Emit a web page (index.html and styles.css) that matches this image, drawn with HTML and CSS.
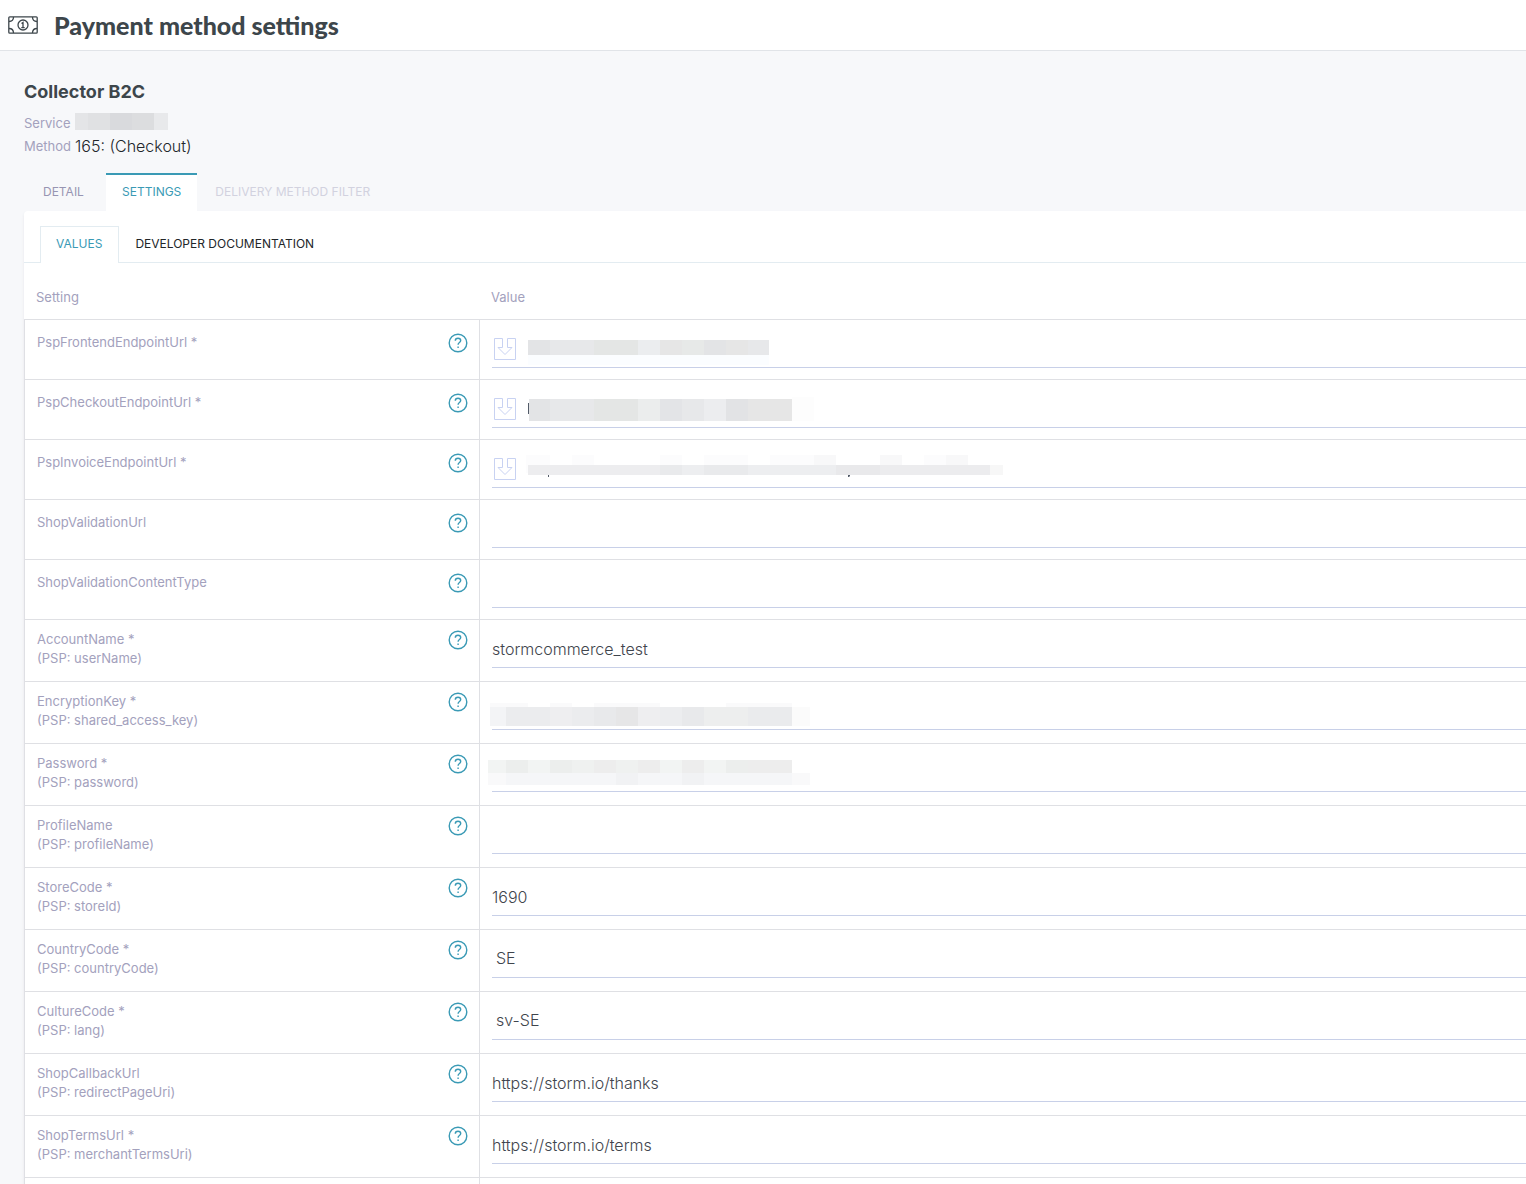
FILE: index.html
```html
<!DOCTYPE html>
<html lang="en">
<head>
<meta charset="utf-8">
<title>Payment method settings</title>
<link rel="stylesheet" href="styles.css">
</head>
<body>
<svg class="defs" aria-hidden="true">
  <symbol id="help" viewBox="0 0 20 20"><circle cx="10" cy="10" r="8.8"/><path d="M7.3 7.8C7.3 6.2 8.5 5.3 10 5.3s2.7.9 2.7 2.3c0 1.9-2.6 2-2.6 4.1M10.100 13.500v1.500"/></symbol>
  <symbol id="inherit" viewBox="0 0 22 22"><path d="M8.500.500H.500v21h21V.500h-8v9h4.500L11 16.500 4 9.500h4.500z"/></symbol>
</svg>
<header class="topbar">
  <svg class="money" viewBox="0 0 30 18" aria-hidden="true"><rect x=".8" y=".8" width="28.400" height="16.400" rx="1"/><circle cx="15" cy="9" r="5"/><path d="M13.500 7.500 15 6.500v5M13.300 11.700h3.400M1 5.500C4 5.500 5.500 4 5.500 1M29 5.500c-3 0-4.500-1.500-4.500-4.500M1 12.500c3 0 4.500 1.500 4.500 4.500M29 12.500c-3 0-4.500 1.500-4.500 4.500"/></svg>
  <h1>Payment method settings</h1>
</header>
<main>
  <section class="summary">
    <h2>Collector B2C</h2>
    <dl>
      <div><dt>Service</dt><dd><svg class="redacted" width="93" height="17" aria-hidden="true"><path fill="#e4e5e7" d="M0 0h13v17H0z"/><path fill="#e0e1e3" d="M13 0h22v17H13z"/><path fill="#d9dadd" d="M35 0h22v17H35z"/><path fill="#dcdddf" d="M57 0h22v17H57z"/><path fill="#e8e9eb" d="M79 0h14v17H79z"/></svg></dd></div>
      <div><dt>Method</dt><dd>165: (Checkout)</dd></div>
    </dl>
  </section>
  <nav class="tabs">
    <a href="#detail">DETAIL</a>
    <a href="#settings" class="active">SETTINGS</a>
    <a href="#filter" class="disabled">DELIVERY METHOD FILTER</a>
  </nav>
  <section class="panel">
    <nav class="subtabs">
      <a href="#values" class="active">VALUES</a>
      <a href="#docs">DEVELOPER DOCUMENTATION</a>
    </nav>
    <table>
      <thead><tr><th class="setting">Setting</th><th>Value</th></tr></thead>
      <tbody>
        <tr class="single"><td><div class="name"><label for="f1">PspFrontendEndpointUrl *</label><button type="button" aria-label="Help"><svg><use href="#help"/></svg></button></div></td>
          <td><div class="field"><svg class="inherit"><use href="#inherit"/></svg><input id="f1" type="text">
            <svg class="mosaic" viewBox="0 0 540 35"><path fill="#fbfdff" d="M36 23h241v10H36z"/><path fill="#e3e4e6" d="M36 8h22v15H36z"/><path fill="#e7e8ea" d="M58 8h44v15H58z"/><path fill="#e4e6e5" d="M102 8h44v15h-44z"/><path fill="#ebedef" d="M146 8h22v15h-22z"/><path fill="#e6e6e6" d="M168 8h22v15h-22z"/><path fill="#e7e9e8" d="M190 8h22v15h-22z"/><path fill="#e3e4e6" d="M212 8h22v15h-22z"/><path fill="#e6e6e6" d="M234 8h22v15h-22z"/><path fill="#e7e8ea" d="M256 8h21v15h-21z"/></svg></div></td></tr>
        <tr class="single"><td><div class="name"><label for="f2">PspCheckoutEndpointUrl *</label><button type="button" aria-label="Help"><svg><use href="#help"/></svg></button></div></td>
          <td><div class="field"><svg class="inherit"><use href="#inherit"/></svg><input id="f2" type="text">
            <svg class="mosaic" viewBox="0 0 540 35"><path fill="#535b68" d="M36 11h1v11h-1z"/><path fill="#fdfdfd" d="M300 5h22v24h-22z"/><path fill="#e3e4e6" d="M37 7h21v22H37z"/><path fill="#e7e8ea" d="M58 7h44v22H58z"/><path fill="#e4e6e5" d="M102 7h44v22h-44z"/><path fill="#ebeded" d="M146 7h22v22h-22z"/><path fill="#e3e4e7" d="M168 7h22v22h-22z"/><path fill="#e7e8ea" d="M190 7h22v22h-22z"/><path fill="#ecedef" d="M212 7h22v22h-22z"/><path fill="#e2e3e5" d="M234 7h22v22h-22z"/><path fill="#e6e6e6" d="M256 7h44v22h-44z"/></svg></div></td></tr>
        <tr class="single"><td><div class="name"><label for="f3">PspInvoiceEndpointUrl *</label><button type="button" aria-label="Help"><svg><use href="#help"/></svg></button></div></td>
          <td><div class="field"><svg class="inherit"><use href="#inherit"/></svg><input id="f3" type="text">
            <svg class="mosaic" viewBox="0 0 540 35"><path fill="#fcfcfd" d="M34 3h24v18H34zM80 3h22v10H80zM168 3h22v10h-22zM212 3h44v10h-44zM278 3h44v10h-44zM432 3h22v10h-22z"/><path fill="#f8f8f9" d="M322 3h22v10h-22zM388 3h22v10h-22zM454 3h22v10h-22z"/><path fill="#ededef" d="M36 13h132v10H36z"/><path fill="#e9eaec" d="M168 13h22v10h-22zM212 13h44v10h-44z"/><path fill="#edeef0" d="M190 13h22v10h-22zM256 13h88v10h-88z"/><path fill="#e9e9eb" d="M344 13h44v10h-44z"/><path fill="#ececee" d="M388 13h110v10H388z"/><path fill="#f7f7f7" d="M498 13h13v10h-13z"/><path fill="#535b68" d="M56 23h1v2h-1zM356 23h2v1l-1 1h-1z"/></svg></div></td></tr>
        <tr class="single"><td><div class="name"><label for="f4">ShopValidationUrl</label><button type="button" aria-label="Help"><svg><use href="#help"/></svg></button></div></td>
          <td><div class="field"><input id="f4" type="text"></div></td></tr>
        <tr class="single"><td><div class="name"><label for="f5">ShopValidationContentType</label><button type="button" aria-label="Help"><svg><use href="#help"/></svg></button></div></td>
          <td><div class="field"><input id="f5" type="text"></div></td></tr>
        <tr><td><div class="name"><label for="f6">AccountName *<br>(PSP: userName)</label><button type="button" aria-label="Help"><svg><use href="#help"/></svg></button></div></td>
          <td><div class="field"><input id="f6" type="text" value="stormcommerce_test"></div></td></tr>
        <tr><td><div class="name"><label for="f7">EncryptionKey *<br>(PSP: shared_access_key)</label><button type="button" aria-label="Help"><svg><use href="#help"/></svg></button></div></td>
          <td><div class="field"><input id="f7" type="text">
            <svg class="mosaic" viewBox="0 0 540 35"><path fill="#fafafb" d="M-2 9h16v4H-2zM14 9h22v4H14zM58 9h22v4H58zM102 9h66v4h-66zM234 9h66v4h-66z"/><path fill="#f3f4f6" d="M-2 13h16v19H-2z"/><path fill="#ebecee" d="M14 13h44v19H14zM80 13h22v19H80z"/><path fill="#eeeef0" d="M58 13h22v19H58zM146 13h22v19h-22z"/><path fill="#e8e9eb" d="M102 13h22v19h-22zM190 13h22v19h-22z"/><path fill="#e6e6e7" d="M124 13h22v19h-22z"/><path fill="#ecedef" d="M168 13h22v19h-22z"/><path fill="#edeeee" d="M212 13h44v19h-44z"/><path fill="#eaebed" d="M256 13h44v19h-44z"/><path fill="#fbfbfb" d="M300 13h18v19h-18z"/></svg></div></td></tr>
        <tr><td><div class="name"><label for="f8">Password *<br>(PSP: password)</label><button type="button" aria-label="Help"><svg><use href="#help"/></svg></button></div></td>
          <td><div class="field"><input id="f8" type="text">
            <svg class="mosaic" viewBox="0 0 540 35"><path fill="#f2f4f3" d="M-4 4h18v13H-4zM36 4h22v13H36zM168 4h22v13h-22zM212 4h22v13h-22z"/><path fill="#eceeed" d="M14 4h22v13H14zM58 4h22v13H58zM234 4h22v13h-22z"/><path fill="#eff1f0" d="M80 4h22v13H80zM124 4h22v13h-22z"/><path fill="#ededed" d="M102 4h22v13h-22zM146 4h22v13h-22zM190 4h22v13h-22zM256 4h44v13h-44z"/><path fill="#f9f9fa" d="M-4 17h18v12H-4zM300 17h18v12h-18z"/><path fill="#f5f6f8" d="M14 17h286v12H14z"/><path fill="#f1f2f4" d="M124 17h22v12h-22zM190 17h22v12h-22z"/></svg></div></td></tr>
        <tr><td><div class="name"><label for="f9">ProfileName<br>(PSP: profileName)</label><button type="button" aria-label="Help"><svg><use href="#help"/></svg></button></div></td>
          <td><div class="field"><input id="f9" type="text"></div></td></tr>
        <tr><td><div class="name"><label for="f10">StoreCode *<br>(PSP: storeId)</label><button type="button" aria-label="Help"><svg><use href="#help"/></svg></button></div></td>
          <td><div class="field"><input id="f10" type="text" value="1690"></div></td></tr>
        <tr><td><div class="name"><label for="f11">CountryCode *<br>(PSP: countryCode)</label><button type="button" aria-label="Help"><svg><use href="#help"/></svg></button></div></td>
          <td><div class="field"><select id="f11"><option>SE</option></select></div></td></tr>
        <tr><td><div class="name"><label for="f12">CultureCode *<br>(PSP: lang)</label><button type="button" aria-label="Help"><svg><use href="#help"/></svg></button></div></td>
          <td><div class="field"><select id="f12"><option>sv-SE</option></select></div></td></tr>
        <tr><td><div class="name"><label for="f13">ShopCallbackUrl<br>(PSP: redirectPageUri)</label><button type="button" aria-label="Help"><svg><use href="#help"/></svg></button></div></td>
          <td><div class="field"><input id="f13" type="text" value="https://storm.io/thanks"></div></td></tr>
        <tr><td><div class="name"><label for="f14">ShopTermsUrl *<br>(PSP: merchantTermsUri)</label><button type="button" aria-label="Help"><svg><use href="#help"/></svg></button></div></td>
          <td><div class="field"><input id="f14" type="text" value="https://storm.io/terms"></div></td></tr>
        <tr class="end"><td></td><td></td></tr>
      </tbody>
    </table>
  </section>
</main>
</body>
</html>
```
FILE: styles.css
```css
* { box-sizing: border-box; }
body {
  margin: 0;
  background: #f7f8fa;
  color: #22262a;
  font: 13px/19px Inter, "Liberation Sans", sans-serif;
}
a { color: inherit; text-decoration: none; }
svg { display: block; fill: none; }
.defs { position: absolute; width: 0; height: 0; }

.topbar {
  display: flex;
  align-items: center;
  gap: 16px;
  height: 51px;
  padding: 0 8px;
  background: #fff;
  border-bottom: 1px solid #e1e4e8;
}
.money { width: 30px; height: 18px; stroke: #3d464b; stroke-width: 1.3; }
h1 { margin: 0; color: #3d464b; font: 900 25px/32px Lato, sans-serif; }

main { padding-left: 24px; }
.summary { padding: 29px 0 15px; }
h2 { margin: 0 0 8px; color: #3d464b; font-size: 18px; line-height: 24px; font-weight: 700; }
dl { margin: 0; }
dl div { display: flex; align-items: center; gap: 4px; height: 23px; }
dt { color: #a3a1bd; width: 47px; }
dd { margin: 0; font-size: 16px; font-weight: 300; }
.redacted { margin-bottom: 4px; }

.tabs { display: flex; height: 38px; color: #9795b2; font-size: 12px; }
.tabs a { padding: 7px 18px; border-top: 2px solid transparent; }
.tabs a:first-child { width: 82px; padding: 7px 19px; }
.tabs .active { padding: 7px 16px; background: #fff; color: #3a9ab5; border-color: #3a9ab5; }
.tabs .disabled { color: #d2d2df; }

.panel {
  background: #fff;
  border-radius: 4px 0 0 0;
  box-shadow: 0 2px 3px #e4e6ea;
}
.subtabs {
  display: flex;
  height: 52px;
  padding: 15px 16px 0;
  border-bottom: 1px solid #e3ecf1;
  font-size: 12px;
}
.subtabs a { height: 37px; padding: 8px 16px; }
.subtabs .active {
  padding: 7px 16px 7px 15px;
  color: #3a9ab5;
  background: #fff;
  border: 1px solid #e3ecf1;
  border-bottom: 0;
}

table { width: 100%; border-spacing: 0; table-layout: fixed; }
th {
  height: 56px;
  padding: 12px 12px 0;
  color: #a3a1bd;
  font-weight: 400;
  text-align: left;
  vertical-align: middle;
}
th.setting { width: 455px; }
td {
  height: 62px;
  padding: 10px 11px 0 12px;
  border-top: 1px solid #dfe0e4;
  border-left: 1px solid #dfe0e4;
  vertical-align: top;
}
.single td { height: 60px; padding-top: 13px; }
td:last-child, .single td:last-child { padding: 12px 0 0 12px; }
.end td, .end td:last-child { height: 7px; padding: 0; }
.name { display: flex; justify-content: space-between; align-items: flex-start; color: #a3a1bd; }
button { padding: 0; border: 0; background: none; }
button svg { width: 20px; height: 20px; stroke: #3a9ab5; stroke-width: 1.4; }
.field { position: relative; display: flex; border-bottom: 1px solid #c8d0e8; }
.inherit { width: 22px; height: 22px; margin: 6px 0 0 2px; stroke: #c8d2f2; }
input, select {
  flex: 1;
  min-width: 0;
  height: 35px;
  padding: 0 0 2px;
  border: 0;
  outline: 0;
  background: none;
  color: #3f454d;
  font: 300 16px/19px Inter, "Liberation Sans", sans-serif;
}
select { appearance: none; padding-left: 4px; }
.mosaic { position: absolute; left: 0; top: 0; width: 540px; height: 35px; overflow: visible; }
```
